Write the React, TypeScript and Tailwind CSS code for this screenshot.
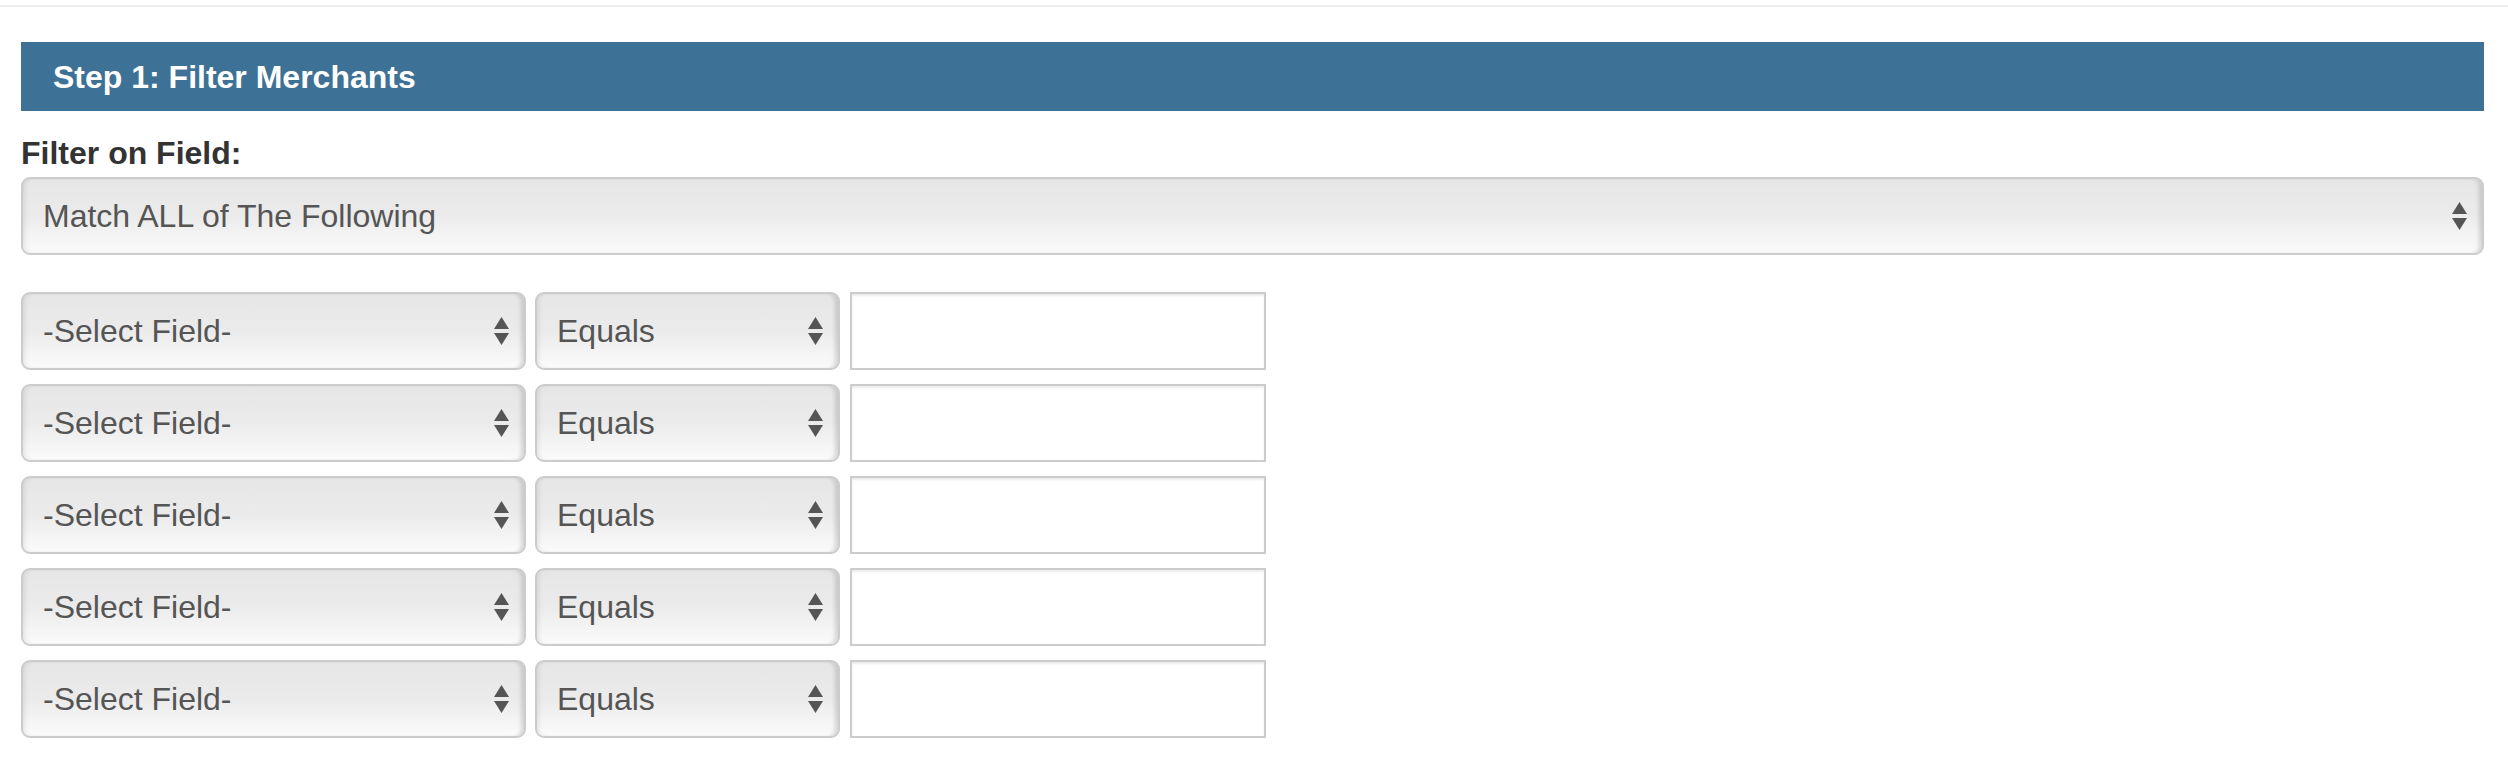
import React from "react";

const Arrows = () => (
    <svg width="15" height="28" viewBox="0 0 15 28" className="shrink-0">
        <polygon points="7.5,0 15,12 0,12" fill="#555555" />
        <polygon points="0,16 15,16 7.5,28" fill="#555555" />
    </svg>
);

function FakeSelect({ label, className }: { label: string; className: string }) {
    return (
        <div
            className={`flex h-[78px] items-center justify-between rounded-[9px] border-2 border-[#cccccc] bg-[linear-gradient(to_bottom,#e6e6e6_0%,#ebebeb_50%,#fbfbfb_100%)] pl-[20px] pr-[15px] text-[32px] text-[#555555] shadow-[inset_4px_0_4px_-2px_rgba(0,0,0,0.08),inset_-5px_0_4px_-2px_rgba(0,0,0,0.14)] ${className}`}
        >
            <span className="leading-none">{label}</span>
            <Arrows />
        </div>
    );
}

export default function App() {
    const rows = [0, 1, 2, 3, 4];

    return (
        <div className="min-h-[760px] bg-white font-['Liberation_Sans',Arial,sans-serif]">
            <div className="pt-[5px]">
                <div className="h-[2px] bg-[#eeeeee]" />
            </div>

            <div className="pl-[21px] pr-[24px]">
                <div className="mt-[35px] flex h-[69px] items-center bg-[#3e7196] pl-[32px]">
                    <h2 className="text-[32px] font-bold leading-none text-white">Step 1: Filter Merchants</h2>
                </div>

                <label className="mt-[24px] block text-[32px] font-bold leading-[36px] text-[#333333]">
                    Filter on Field:
                </label>

                <FakeSelect label="Match ALL of The Following" className="mt-[6px] w-full" />

                <div className="mt-[37px] flex flex-col gap-[14px]">
                    {rows.map(r => (
                        <div key={r} className="flex items-center">
                            <FakeSelect label="-Select Field-" className="w-[505px]" />
                            <FakeSelect label="Equals" className="ml-[9px] w-[305px]" />
                            <div className="ml-[10px] h-[78px] w-[416px] border-2 border-[#cccccc] bg-white shadow-[inset_0_2px_2px_rgba(0,0,0,0.075)]" />
                        </div>
                    ))}
                </div>
            </div>
        </div>
    );
}
